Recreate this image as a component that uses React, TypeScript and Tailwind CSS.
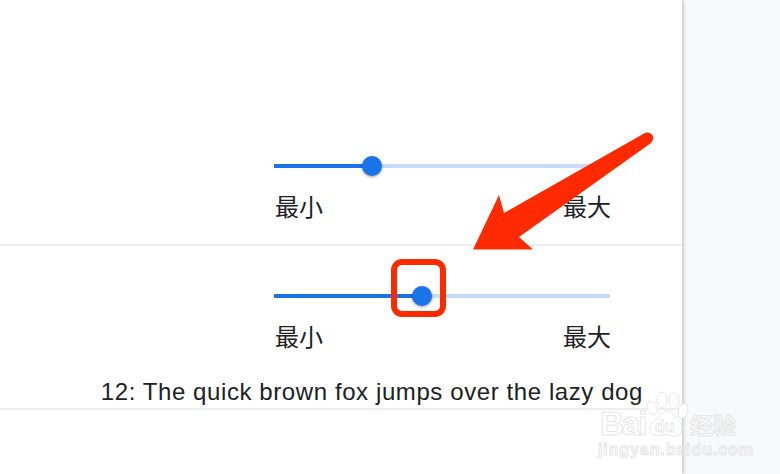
const FONT = "font-['Liberation_Sans','Noto_Sans_CJK_SC',sans-serif]";
const GHOST = "font-bold text-transparent [-webkit-text-stroke:1px_#e6e6e6]";

function Slider({ pct }: { pct: number }) {
  return (
    <div className="w-[336px]">
      <div className="relative h-[4px] bg-[#c6dafa]">
        <div className="h-full bg-[#1a73e8]" style={{ width: `${pct}%` }} />
        <div
          className="absolute top-1/2 h-[20px] w-[20px] -translate-x-1/2 -translate-y-1/2 rounded-full bg-[#1a73e8] shadow-[0_1px_3px_rgba(0,0,0,0.4)]"
          style={{ left: `${pct}%` }}
        />
      </div>
      <div className="mt-[23px] flex justify-between text-[24px] leading-[34px] text-[#202124]">
        <span className="ml-[1px]">最小</span>
        <span className="mr-[-1px]">最大</span>
      </div>
    </div>
  );
}

function Watermark() {
  return (
    <div className="pointer-events-none absolute left-[598px] top-[390px] flex w-[142px] flex-col">
      <div className="flex h-[48px] items-end">
        <span className={`mb-[-5px] ml-[2px] w-[45px] text-[33px] leading-[38px] tracking-[-2px] ${GHOST}`}>Bai</span>
        <svg width="44" height="47" viewBox="0 0 44 47" fill="#fff" stroke="#e6e6e6" strokeWidth="1">
          <ellipse cx="7" cy="17" rx="4.5" ry="7" transform="rotate(-25 7 17)" />
          <ellipse cx="17" cy="9" rx="5" ry="8" />
          <ellipse cx="29" cy="10" rx="5" ry="8" />
          <ellipse cx="38" cy="20" rx="4.5" ry="7.5" transform="rotate(15 38 20)" />
          <path d="M5 37c1-7 7-9 11-14 4-4 8-4 12 0 3 5 8 7 9 13 1 6-4 10-9 9-4-1-8-2-12-1-6 2-12-1-11-7z" />
          <text x="10" y="41" fontSize="16" fontWeight="700" fill="#fff" stroke="#e6e6e6" strokeWidth="0.8">du</text>
        </svg>
        <span className={`mb-[-3px] ml-[1px] text-[23px] leading-[30px] ${GHOST}`}>经验</span>
      </div>
      <span className={`mt-[2px] whitespace-nowrap text-[16px] leading-[20px] tracking-[0.9px] ${GHOST}`}>jingyan.baidu.com</span>
    </div>
  );
}

export default function App() {
  return (
    <div className={`relative flex h-[474px] w-[780px] overflow-hidden bg-[#f8f9fa] ${FONT}`}>
      <div className="h-full w-[682px] bg-white shadow-[1px_0_4px_rgba(60,64,67,0.35)]">
        <div className="flex h-[246px] flex-col items-end border-b-2 border-[#eeeeee] pr-[72px] pt-[164px]">
          <Slider pct={29.2} />
        </div>
        <div className="flex h-[164px] flex-col items-end border-b-2 border-[#eeeeee] pt-[48px]">
          <div className="pr-[72px]">
            <Slider pct={44} />
          </div>
          <p className="mt-[20px] pr-[39px] text-[24px] leading-[34px] tracking-[0.59px] text-[#202124]">
            12: The quick brown fox jumps over the lazy dog
          </p>
        </div>
      </div>

      {/* annotations on top of the screenshot */}
      <div className="absolute left-[391px] top-[259px] h-[58px] w-[55px] rounded-[11px] border-[6px] border-[#ff2a00]" />
      <svg className="absolute left-0 top-0" width="780" height="474" viewBox="0 0 780 474">
        <path
          d="M644 133.5 L504 213 L499 195 L473 249.5 L533 249.5 L519 237 L651 143 Q655 138 652 134.5 Q648 131 644 133.5 Z"
          fill="#ff2a00"
        />
      </svg>
      <Watermark />
    </div>
  );
}
